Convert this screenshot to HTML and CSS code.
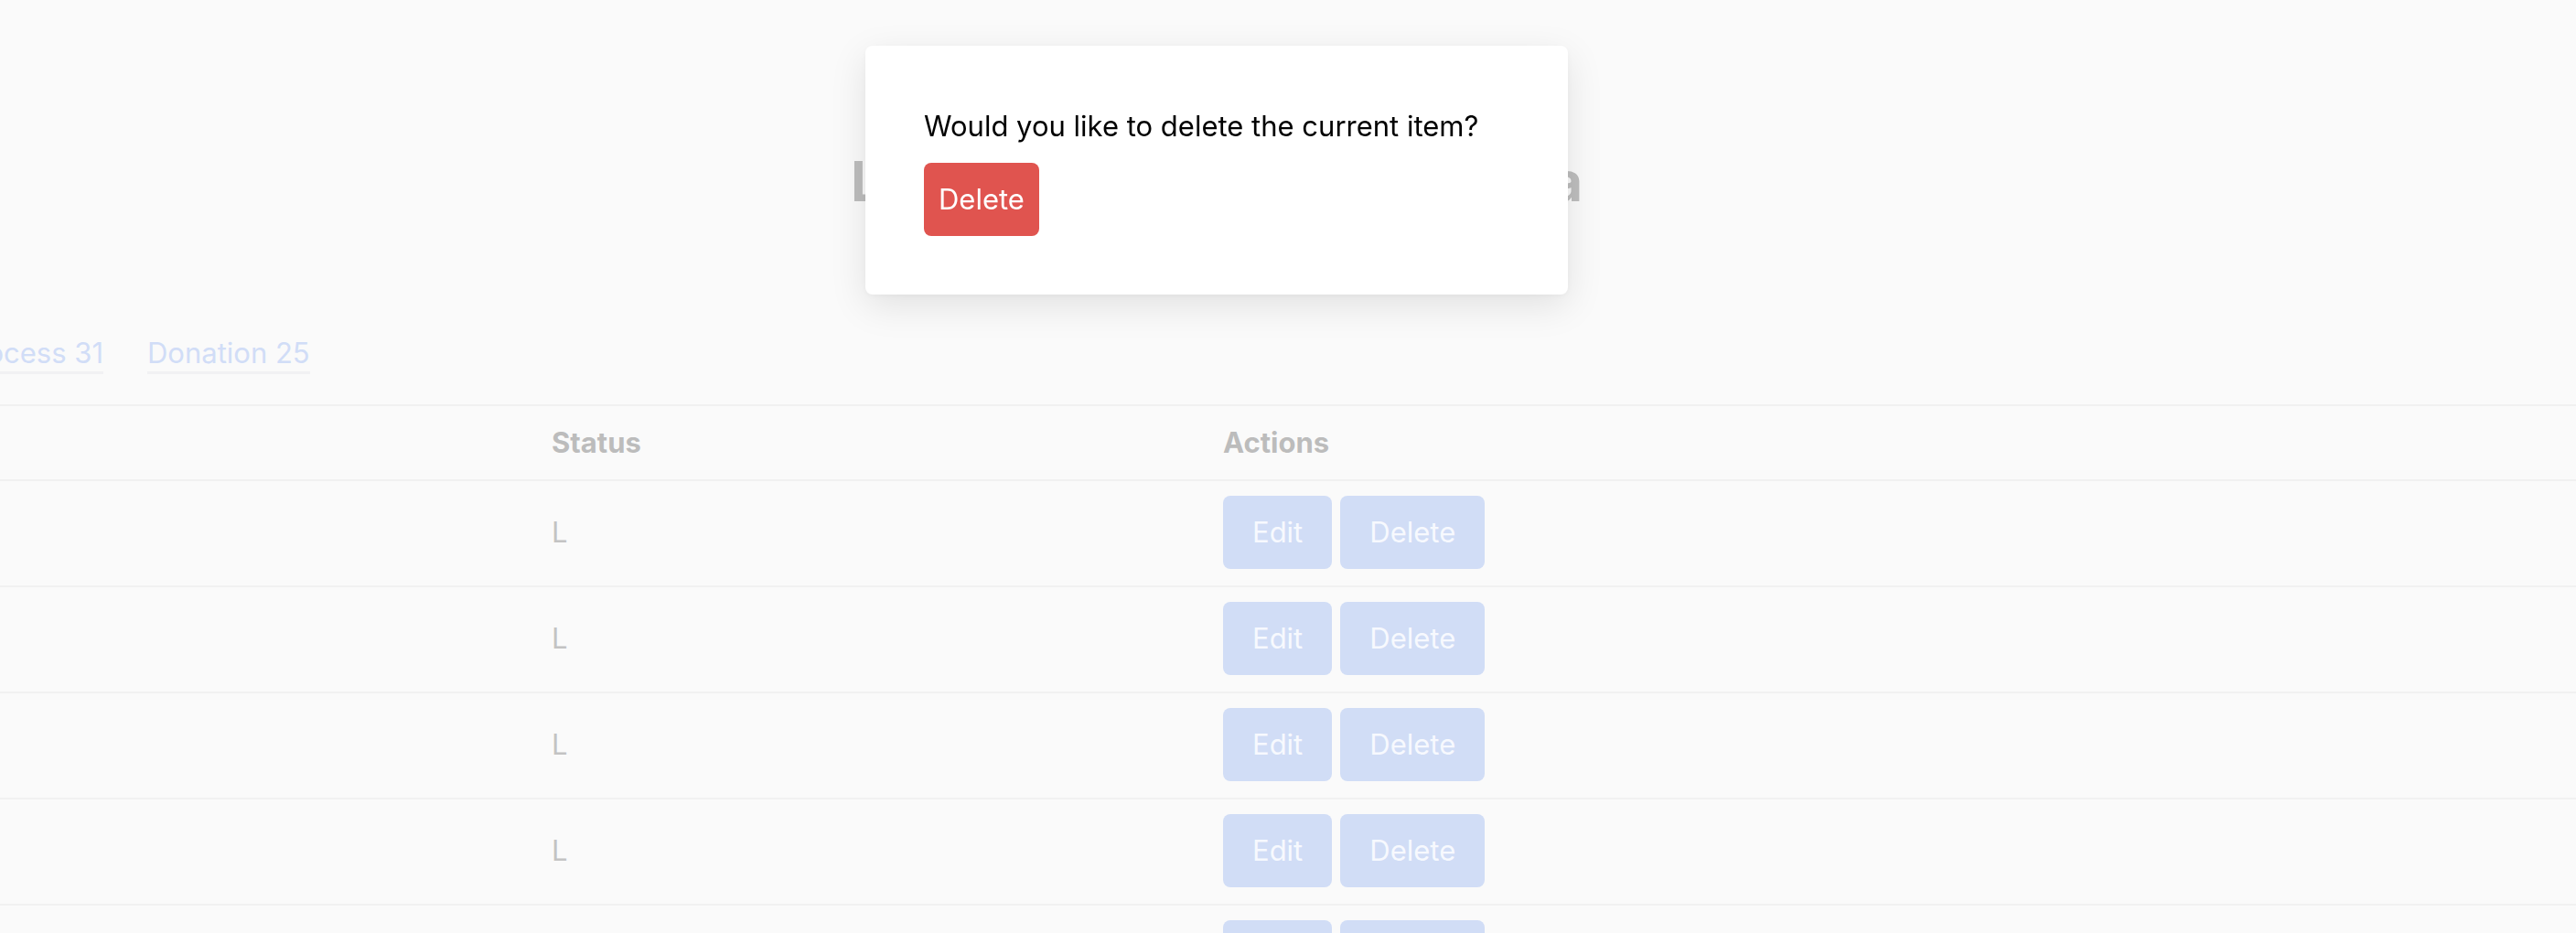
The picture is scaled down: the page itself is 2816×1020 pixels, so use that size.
FILE: index.html
```html
<!DOCTYPE html>
<html lang="en">
<head>
<meta charset="utf-8">
<title>Donations</title>
<link rel="stylesheet" href="styles.css">
</head>
<body>
<div class="page">
  <header class="page-head">
    <h1 class="title">List of Donation Data</h1>
  </header>

  <nav class="tabs">
    <div class="tab-clip"><a class="tab">In Process 31</a></div>
    <a class="tab">Donation 25</a>
  </nav>

  <div class="table">
    <div class="row head">
      <div class="cell lead"></div>
      <div class="cell">Status</div>
      <div class="cell">Actions</div>
    </div>
    <div class="row">
      <div class="cell lead"></div>
      <div class="cell status">L</div>
      <div class="cell actions"><button class="btn">Edit</button><button class="btn">Delete</button></div>
    </div>
    <div class="row">
      <div class="cell lead"></div>
      <div class="cell status">L</div>
      <div class="cell actions"><button class="btn">Edit</button><button class="btn">Delete</button></div>
    </div>
    <div class="row">
      <div class="cell lead"></div>
      <div class="cell status">L</div>
      <div class="cell actions"><button class="btn">Edit</button><button class="btn">Delete</button></div>
    </div>
    <div class="row">
      <div class="cell lead"></div>
      <div class="cell status">L</div>
      <div class="cell actions"><button class="btn">Edit</button><button class="btn">Delete</button></div>
    </div>
    <div class="row">
      <div class="cell lead"></div>
      <div class="cell status">L</div>
      <div class="cell actions"><button class="btn">Edit</button><button class="btn">Delete</button></div>
    </div>
  </div>
</div>

<div class="overlay">
  <div class="modal">
    <p class="modal-text">Would you like to delete the current item?</p>
    <button class="btn-danger">Delete</button>
  </div>
</div>
</body>
</html>
```

FILE: styles.css
```css
* { box-sizing: border-box; }

html, body {
  margin: 0;
  padding: 0;
  background: #fafafa;
  overflow: hidden;
}

body {
  font-family: Inter, "Noto Sans", "Liberation Sans", sans-serif;
  color: #000;
}

.page {
  width: 2816px;
}

.page-head {
  width: 2660px;
  padding-top: 162px;
  text-align: center;
}

.title {
  display: inline-block;
  width: 800px;
  margin: 0;
  font-size: 60px;
  line-height: 72px;
  font-weight: 700;
  color: #bdbdbd;
  white-space: nowrap;
  text-align: justify;
  text-align-last: justify;
  white-space: normal;
}

.tabs {
  display: flex;
  gap: 48px;
  margin-top: 132px;
}

.tab-clip {
  width: 113px;
  display: flex;
  justify-content: flex-end;
}

.tab {
  flex: none;
  white-space: nowrap;
  font-size: 31px;
  line-height: 40px;
  color: #d1ddf7;
  border-bottom: 3px solid #f1f1f3;
}

.table {
  margin-top: 33px;
  border-top: 2px solid #f1f1f1;
}

.row {
  display: grid;
  grid-template-columns: 603px 734px 1fr;
  align-items: center;
  padding: 16px 0 18px;
  border-bottom: 2px solid #f1f1f1;
}

.row.head {
  padding: 16px 0;
  font-size: 31px;
  line-height: 48px;
  font-weight: 700;
  color: #bcbcbc;
}

.status {
  font-size: 31px;
  line-height: 48px;
  color: #c3c3c3;
}

.actions {
  display: flex;
  gap: 9px;
}

.btn {
  font-family: inherit;
  font-size: 31px;
  line-height: 48px;
  padding: 16px 32px;
  border: 0;
  border-radius: 8px;
  background: #d1ddf6;
  color: #f7f9fe;
}

.overlay {
  position: fixed;
  left: 0;
  top: 0;
  width: 2660px;
  display: flex;
  justify-content: center;
  padding-top: 50px;
}

.modal {
  width: 768px;
  height: 272px;
  background: #fff;
  border-radius: 8px;
  padding: 64px;
  box-shadow: 0 12px 40px rgba(0, 0, 0, 0.10), 0 2px 8px rgba(0, 0, 0, 0.04);
}

.modal-text {
  margin: 0 0 16px;
  font-size: 31px;
  line-height: 48px;
  color: #000;
  white-space: nowrap;
}

.btn-danger {
  font-family: inherit;
  font-size: 31px;
  line-height: 48px;
  padding: 16px;
  border: 0;
  border-radius: 8px;
  background: #e0544f;
  color: #fff;
}
```
